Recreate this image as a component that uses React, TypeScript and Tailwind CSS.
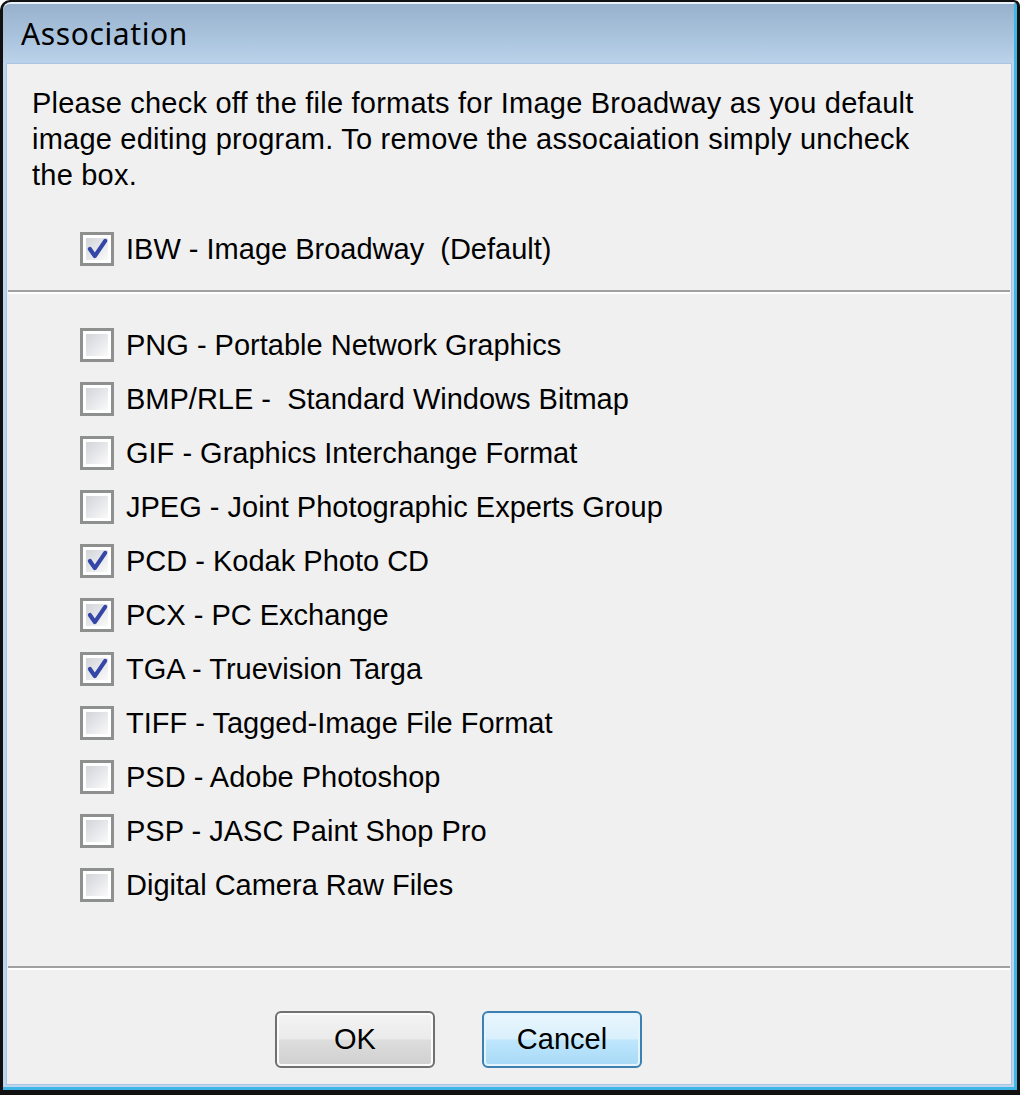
import React, { useState } from "react";

interface Format {
  id: string;
  label: string;
  checked: boolean;
}

const FORMATS: Format[] = [
  { id: "png", label: "PNG - Portable Network Graphics", checked: false },
  { id: "bmp", label: "BMP/RLE -  Standard Windows Bitmap", checked: false },
  { id: "gif", label: "GIF - Graphics Interchange Format", checked: false },
  { id: "jpeg", label: "JPEG - Joint Photographic Experts Group", checked: false },
  { id: "pcd", label: "PCD - Kodak Photo CD", checked: true },
  { id: "pcx", label: "PCX - PC Exchange", checked: true },
  { id: "tga", label: "TGA - Truevision Targa", checked: true },
  { id: "tiff", label: "TIFF - Tagged-Image File Format", checked: false },
  { id: "psd", label: "PSD - Adobe Photoshop", checked: false },
  { id: "psp", label: "PSP - JASC Paint Shop Pro", checked: false },
  { id: "raw", label: "Digital Camera Raw Files", checked: false },
];

function CheckBox({ checked }: { checked: boolean }) {
  return (
    <span className="w-[34px] h-[34px] shrink-0 border-[3px] border-[#8e8f8f] bg-white p-[3px] flex">
      <span className="relative flex-1 bg-gradient-to-br from-[#d2d4d8] via-[#e6e7ea] to-[#fafafa]">
        {checked && (
          <svg viewBox="0 0 22 22" className="absolute -inset-[1px] w-[24px] h-[24px]">
            <path
              d="M4.5 11 L9 17.5 L18.5 3.5"
              fill="none"
              stroke="#3446a6"
              strokeWidth="3.8"
              strokeLinecap="round"
              strokeLinejoin="round"
            />
          </svg>
        )}
      </span>
    </span>
  );
}

function Row({ label, checked, onToggle }: { label: string; checked: boolean; onToggle: () => void }) {
  return (
    <div onClick={onToggle} className="h-[54px] flex items-center gap-[12px] pl-[73px] cursor-default">
      <CheckBox checked={checked} />
      <span className="text-[29px] leading-none text-black whitespace-pre">{label}</span>
    </div>
  );
}

function Separator() {
  return (
    <div className="mx-[1px]">
      <div className="h-[2px] bg-[#a0a0a0]" />
      <div className="h-[2px] bg-white" />
    </div>
  );
}

export default function App() {
  const [ibw, setIbw] = useState(true);
  const [formats, setFormats] = useState<Format[]>(FORMATS);

  const toggle = (id: string) =>
    setFormats((prev) => prev.map((f) => (f.id === id ? { ...f, checked: !f.checked } : f)));

  return (
    <div
      className="w-[1020px] h-[1095px] bg-[#111] rounded-tl-[10px] rounded-tr-[6px] pt-[2px] pl-[3px] pr-[3px] pb-[5px]"
      style={{ fontFamily: '"Liberation Sans", Arial, sans-serif' }}
    >
      <div className="h-full flex flex-col rounded-tl-[8px] rounded-tr-[4px] bg-[#bdd5ee] border-t-[2px] border-[#e9f1fa] border-r-[3px] border-r-[#3fb7e6] border-b-[3px] border-b-[#3fb7e6]">
        {/* Title bar */}
        <div className="h-[59px] shrink-0 flex items-center pl-[18px] bg-gradient-to-b from-[#97b1cd] to-[#bad2ea] rounded-tl-[7px]">
          <span
            className="text-[30px] tracking-[0.6px] text-black"
            style={{ fontFamily: '"Noto Sans", "Open Sans", sans-serif' }}
          >
            Association
          </span>
        </div>

        {/* Body */}
        <div className="flex-1 flex flex-col ml-[3px] mr-[2px] mb-[2px] bg-[#f0f0f0] border border-[#a9c5e2]">
          <p className="pt-[21px] pl-[25px] text-[29px] leading-[36px] tracking-[0.22px] text-black whitespace-nowrap">
            Please check off the file formats for Image Broadway as you default
            <br />
            image editing program. To remove the assocaiation simply uncheck
            <br />
            the box.
          </p>

          <div className="mt-[29px] mb-[14px]">
            <Row label="IBW - Image Broadway  (Default)" checked={ibw} onToggle={() => setIbw(!ibw)} />
          </div>

          <Separator />

          <div className="mt-[24px] mb-[54px] flex flex-col">
            {formats.map((f) => (
              <Row key={f.id} label={f.label} checked={f.checked} onToggle={() => toggle(f.id)} />
            ))}
          </div>

          <Separator />

          <div className="mt-[41px] flex gap-[47px] pl-[268px]">
            <button className="w-[160px] h-[57px] rounded-[6px] border-[2px] border-[#707070] bg-[linear-gradient(#f3f3f3_0%,#ebebeb_48%,#dddddd_52%,#cfcfcf_100%)] shadow-[inset_0_0_0_2px_#fbfbfb] text-[29px] text-black">
              OK
            </button>
            <button className="w-[160px] h-[57px] rounded-[6px] border-[2px] border-[#3c7fb1] bg-[linear-gradient(#eaf6fd_0%,#d9f0fc_48%,#bee6fd_52%,#a7d9f5_100%)] shadow-[inset_0_0_0_2px_#e6f5fd] text-[29px] text-black">
              Cancel
            </button>
          </div>
        </div>
      </div>
    </div>
  );
}
